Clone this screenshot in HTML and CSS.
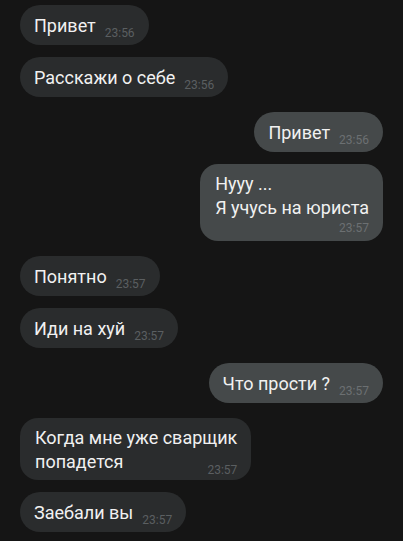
FILE: index.html
```html
<!DOCTYPE html>
<html>

<head>
    <meta charset="utf-8" />
    <title>chat</title>
    <link rel="stylesheet" href="styles.css">
</head>

<body>
    <div class="chat">
        <div class="msg in">
            <span class="text">Привет</span>
            <span class="time">23:56</span>
        </div>
        <div class="msg in">
            <span class="text">Расскажи о себе</span>
            <span class="time">23:56</span>
        </div>
        <div class="msg out next-sender">
            <span class="text">Привет</span>
            <span class="time">23:56</span>
        </div>
        <div class="msg out multi">
            <span class="text">Нууу ...<br>Я учусь на юриста</span>
            <span class="time">23:57</span>
        </div>
        <div class="msg in next-sender">
            <span class="text">Понятно</span>
            <span class="time">23:57</span>
        </div>
        <div class="msg in">
            <span class="text">Иди на хуй</span>
            <span class="time">23:57</span>
        </div>
        <div class="msg out next-sender">
            <span class="text">Что прости ?</span>
            <span class="time">23:57</span>
        </div>
        <div class="msg in multi wrap next-sender">
            <span class="text">Когда мне уже сварщик</span>
            <div class="last-line">
                <span class="text">попадется</span>
                <span class="time">23:57</span>
            </div>
        </div>
        <div class="msg in">
            <span class="text">Заебали вы</span>
            <span class="time">23:57</span>
        </div>
    </div>
</body>

</html>
```

FILE: styles.css
```css
html,
body {
    margin: 0;
    background-color: #151515;
}

body {
    font-family: Roboto, "Noto Sans", sans-serif;
    color: #f1f1f1;
}

.chat {
    display: flex;
    flex-direction: column;
    align-items: flex-start;
    gap: 12px;
    padding: 5px 20px 0;
}

.msg {
    display: flex;
    align-items: flex-end;
    padding: 11px 14px 9px 14px;
    border-radius: 20px;
    background-color: #2a2c2d;
}

.msg.out {
    align-self: flex-end;
    background-color: #45494a;
}

.next-sender {
    margin-top: 3px;
}

.text {
    font-size: 18px;
    line-height: 20px;
}

.time {
    margin-left: 9px;
    margin-bottom: -4px;
    font-size: 12px;
    line-height: 14px;
    color: #5b5f61;
}

.out .time {
    color: #6c7072;
}

.msg.multi {
    flex-direction: column;
    align-items: stretch;
    padding: 8px 14px 6px 15px;
    border-radius: 18px;
}

.multi .text {
    line-height: 24px;
}

.multi .time {
    align-self: flex-end;
    margin-top: 1px;
    margin-bottom: 0;
}

.last-line {
    display: flex;
    justify-content: space-between;
    align-items: flex-end;
}

.wrap {
    padding-bottom: 8px;
}

.wrap .last-line .time {
    margin-top: 0;
    margin-bottom: -3px;
}
```
